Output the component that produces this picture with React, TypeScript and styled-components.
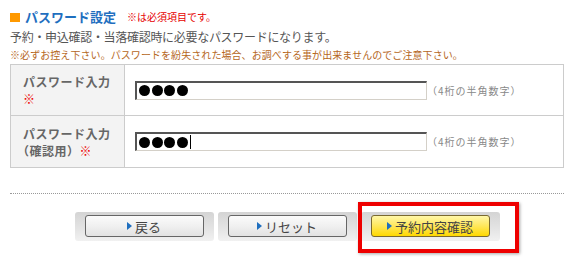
import React from "react";
import styled, { createGlobalStyle } from "styled-components";

const GlobalStyle = createGlobalStyle`
  html, body {
    margin: 0;
    padding: 0;
    background: #ffffff;
  }
  body {
    font-family: "Noto Sans CJK JP", "Liberation Sans", sans-serif;
  }
`;

const Page = styled.div`
  box-sizing: border-box;
  width: 564px;
  min-height: 257px;
  padding: 10px 0 0 10px;
`;

const TitleRow = styled.div`
  display: flex;
  align-items: center;
  height: 14px;
`;

const TitleMark = styled.span`
  width: 10px;
  height: 9px;
  background: #ff9900;
  margin-right: 5px;
`;

const Title = styled.h2`
  margin: 0;
  font-size: 13px;
  font-weight: bold;
  color: #1f6fbf;
  line-height: 14px;
`;

const Required = styled.span`
  margin-left: 11px;
  font-size: 10px;
  color: #e60000;
  line-height: 14px;
`;

const Lead = styled.p`
  margin: 5px 0 0;
  font-size: 12px;
  line-height: 16px;
  color: #555555;
  letter-spacing: -0.3px;
`;

const Caution = styled.p`
  margin: 3px 0 0;
  font-size: 10px;
  line-height: 14px;
  color: #b5661b;
  letter-spacing: 0.07px;
`;

const FormTable = styled.table`
  margin-top: 2px;
  width: 554px;
  border-collapse: collapse;
  border: 1px solid #cccccc;
`;

const Row = styled.tr<{ $h: number }>`
  height: ${(p) => p.$h}px;
`;

const LabelCell = styled.th`
  width: 101px;
  padding: 0 0 0 12px;
  background: #f3f3f3;
  border: 1px solid #cccccc;
  text-align: left;
  vertical-align: middle;
  font-size: 12px;
  font-weight: bold;
  line-height: 17px;
  color: #666666;
  letter-spacing: 0.5px;
`;

const LabelNote = styled.span`
  margin-left: -6px;
`;

const Mark = styled.span`
  color: #ee0000;
`;

const FieldCell = styled.td`
  padding: 0 0 0 10px;
  border: 1px solid #cccccc;
  vertical-align: middle;
`;

const FieldLine = styled.div`
  display: flex;
  align-items: center;
`;

const PassBox = styled.div`
  box-sizing: border-box;
  width: 292px;
  height: 19px;
  display: flex;
  align-items: center;
  gap: 1.5px;
  padding-left: 2px;
  background: #ffffff;
  border-top: 2px solid #555555;
  border-left: 2px solid #555555;
  border-right: 1px solid #d4d0c8;
  border-bottom: 1px solid #d4d0c8;
`;

const Dot = styled.span`
  width: 11px;
  height: 11px;
  border-radius: 50%;
  background: #000000;
`;

const Caret = styled.span`
  width: 1px;
  height: 14px;
  background: #000000;
  margin-left: 1px;
`;

const Hint = styled.span`
  margin-left: 0;
  font-size: 10px;
  letter-spacing: 1px;
  color: #888888;
  white-space: nowrap;
`;

const Divider = styled.hr`
  margin: 25px 0 0;
  border: none;
  border-top: 1px dotted #999999;
  height: 0;
`;

const ButtonBar = styled.div`
  margin-top: 18px;
  padding-bottom: 14px;
  display: flex;
  justify-content: center;
  align-items: flex-start;
  gap: 4px;
`;

const Shell = styled.div`
  position: relative;
  padding: 3px 10px 4px;
  border-radius: 3px;
  background: linear-gradient(#d4d4d4 0%, #dedede 35%, #e6e6e6 65%, #f1f1f1 100%);
`;

const Button = styled.button<{ $primary?: boolean }>`
  width: 119px;
  height: 22px;
  display: flex;
  align-items: center;
  justify-content: center;
  gap: 3px;
  padding: 0;
  border: 1px solid ${(p) => (p.$primary ? "#7a6a30" : "#666666")};
  border-radius: 3px;
  background: ${(p) =>
    p.$primary
      ? "linear-gradient(#fff7a8 0%, #ffe75a 50%, #ffd800 100%)"
      : "linear-gradient(#fbfbfb 0%, #f0f0f0 50%, #e2e2e2 100%)"};
  font-family: "Noto Sans CJK JP", "Liberation Sans", sans-serif;
  font-size: 13px;
  color: #444444;
  cursor: pointer;
`;

const Arrow = styled.span`
  width: 0;
  height: 0;
  border-top: 4px solid transparent;
  border-bottom: 4px solid transparent;
  border-left: 5px solid #1f6fbf;
`;

const Highlight = styled.div`
  position: absolute;
  left: -3px;
  right: -19px;
  top: -10px;
  bottom: -12px;
  border: 4px solid #ee0000;
  box-shadow: 1px 1px 3px rgba(0, 0, 0, 0.35);
  pointer-events: none;
  z-index: 2;
`;

function Dots({ caret }: { caret?: boolean }) {
  return (
    <PassBox>
      <Dot />
      <Dot />
      <Dot />
      <Dot />
      {caret && <Caret />}
    </PassBox>
  );
}

export default function App() {
  return (
    <Page>
      <GlobalStyle />
      <TitleRow>
        <TitleMark />
        <Title>パスワード設定</Title>
        <Required>※は必須項目です。</Required>
      </TitleRow>
      <Lead>予約・申込確認・当落確認時に必要なパスワードになります。</Lead>
      <Caution>
        ※必ずお控え下さい。パスワードを紛失された場合、お調べする事が出来ませんのでご注意下さい。
      </Caution>

      <FormTable>
        <tbody>
          <Row $h={51}>
            <LabelCell>
              パスワード入力
              <br />
              <Mark>※</Mark>
            </LabelCell>
            <FieldCell>
              <FieldLine>
                <Dots />
                <Hint>（4桁の半角数字）</Hint>
              </FieldLine>
            </FieldCell>
          </Row>
          <Row $h={52}>
            <LabelCell>
              パスワード入力
              <br />
              <LabelNote>（確認用）</LabelNote>
              <Mark>※</Mark>
            </LabelCell>
            <FieldCell>
              <FieldLine>
                <Dots caret />
                <Hint>（4桁の半角数字）</Hint>
              </FieldLine>
            </FieldCell>
          </Row>
        </tbody>
      </FormTable>

      <Divider />

      <ButtonBar>
        <Shell>
          <Button>
            <Arrow />
            戻る
          </Button>
        </Shell>
        <Shell>
          <Button>
            <Arrow />
            リセット
          </Button>
        </Shell>
        <Shell>
          <Button $primary>
            <Arrow />
            予約内容確認
          </Button>
          <Highlight />
        </Shell>
      </ButtonBar>
    </Page>
  );
}
